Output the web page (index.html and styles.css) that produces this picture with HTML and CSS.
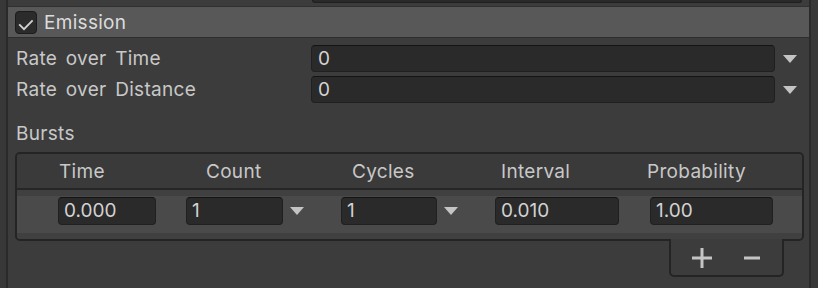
FILE: index.html
```html
<!DOCTYPE html>
<html lang="en">
<head>
  <meta charset="UTF-8" />
  <meta name="viewport" content="width=device-width, initial-scale=1.0" />
  <title>Emission</title>
  <link rel="stylesheet" href="styles.css">
</head>
<body>
  <div class="module">
    <div class="prev-row"><div class="prev-field"></div></div>

    <div class="module-header">
      <span class="toggle">
        <svg width="22" height="22" viewBox="0 0 22 22"><path d="M3.5 12.5 L8.8 17.8 L18.3 8.2" fill="none" stroke="#d2d2d2" stroke-width="2"/></svg>
      </span>
      <span class="module-title">Emission</span>
    </div>

    <div class="props">
      <div class="prop">
        <span class="prop-label">Rate over Time</span>
        <div class="field">0</div>
        <svg class="arrow" width="14" height="8" viewBox="0 0 14 8"><polygon points="0,0 14,0 7,8" fill="#c4c4c4"/></svg>
      </div>
      <div class="prop">
        <span class="prop-label">Rate over Distance</span>
        <div class="field">0</div>
        <svg class="arrow" width="14" height="8" viewBox="0 0 14 8"><polygon points="0,0 14,0 7,8" fill="#c4c4c4"/></svg>
      </div>

      <div class="section-label">Bursts</div>

      <div class="bursts">
        <div class="bursts-head">
          <span>Time</span>
          <span>Count</span>
          <span>Cycles</span>
          <span>Interval</span>
          <span>Probability</span>
        </div>
        <div class="bursts-body">
          <div class="burst-row">
            <div class="cell"><div class="field small w-time">0.000</div></div>
            <div class="cell">
              <div class="field small w-count">1</div>
              <svg class="arrow" width="14" height="8" viewBox="0 0 14 8"><polygon points="0,0 14,0 7,8" fill="#c4c4c4"/></svg>
            </div>
            <div class="cell">
              <div class="field small w-cycles">1</div>
              <svg class="arrow" width="14" height="8" viewBox="0 0 14 8"><polygon points="0,0 14,0 7,8" fill="#c4c4c4"/></svg>
            </div>
            <div class="cell"><div class="field small w-interval">0.010</div></div>
            <div class="cell"><div class="field small w-prob">1.00</div></div>
          </div>
        </div>
      </div>

      <div class="list-footer">
        <div class="footer-buttons">
          <svg width="20" height="20" viewBox="0 0 20 20"><path d="M10 0 V20 M0 10 H20" stroke="#c4c4c4" stroke-width="3"/></svg>
          <svg width="16" height="20" viewBox="0 0 16 20"><path d="M0 10 H16" stroke="#c4c4c4" stroke-width="3"/></svg>
        </div>
      </div>
    </div>
  </div>
</body>
</html>
```

FILE: styles.css
```css
* {
  box-sizing: border-box;
}
body {
  margin: 0;
  background: #383838;
  font-family: Inter, 'Noto Sans', sans-serif;
  font-size: 19px;
  letter-spacing: 0.3px;
  word-spacing: 3px;
  color: #c8c8c8;
  height: 288px;
  overflow: hidden;
}
.module {
  margin-left: 6px;
  width: 805px;
  height: 300px;
  background: #3c3c3c;
  border-left: 2px solid #2a2a2a;
  border-right: 2px solid #2a2a2a;
}
.prev-row {
  height: 3px;
}
.prev-field {
  margin-left: 304px;
  width: 490px;
  height: 3px;
  background: #2a2a2a;
  border: 1px solid #1f1f1f;
  border-top: none;
  border-radius: 0 0 4px 4px;
}
.module-header {
  margin-top: 3px;
  height: 32px;
  display: flex;
  align-items: center;
  gap: 7px;
  padding-left: 7px;
  background: #585858;
  border-top: 1px solid #303030;
  border-bottom: 1px solid #2e2e2e;
}
.toggle {
  width: 22px;
  height: 23px;
  background: #2b2b2b;
  border: 1px solid #1c1c1c;
  border-radius: 4px;
  display: flex;
}
.module-title {
  color: #dcdcdc;
}
.props {
  padding: 7px 0 0 8px;
}
.prop {
  display: flex;
  align-items: center;
  height: 27px;
  margin-bottom: 4px;
}
.prop-label {
  width: 295px;
}
.field {
  background: #2a2a2a;
  border: 1px solid #202020;
  border-top-color: #141414;
  border-radius: 4px;
  color: #d2d2d2;
  padding: 0 6px;
  line-height: 25px;
  height: 27px;
  letter-spacing: 0;
}
.prop .field {
  width: 464px;
}
.prop .arrow {
  margin-left: 8px;
}
.section-label {
  margin-top: 19px;
  line-height: 24px;
}
.bursts {
  margin-top: 6px;
  width: 789px;
  margin-left: -1px;
  border: 2px solid #242424;
  border-radius: 5px;
  overflow: hidden;
}
.bursts-head {
  display: grid;
  grid-template-columns: 147px 146px 149px 146px 1fr;
  padding-left: 42px;
  height: 36px;
  line-height: 36px;
  background: #3a3a3a;
  border-bottom: 2px solid #262626;
}
.bursts-body {
  background: #404040;
  padding: 6px 0 6px;
}
.burst-row {
  display: grid;
  grid-template-columns: 128px 155px 154px 155px 1fr;
  padding-left: 41px;
  padding-top: 1px;
  height: 37px;
  background: #4a4a4a;
}
.cell {
  display: flex;
  align-items: center;
  height: 28px;
}
.field.small {
  height: 28px;
  line-height: 26px;
  padding: 0 5px;
}
.cell .arrow {
  margin-left: 7px;
}
.w-time { width: 98px; }
.w-count { width: 97px; }
.w-cycles { width: 96px; }
.w-interval { width: 124px; }
.w-prob { width: 123px; }
.list-footer {
  display: flex;
  justify-content: flex-end;
  width: 787px;
}
.footer-buttons {
  margin-top: -2px;
  margin-right: 19px;
  width: 115px;
  height: 38px;
  background: #3c3c3c;
  border: 2px solid #242424;
  border-top: none;
  border-radius: 0 0 5px 5px;
  display: flex;
  align-items: center;
  justify-content: space-between;
  padding: 2px 22px 0 21px;
}
```
